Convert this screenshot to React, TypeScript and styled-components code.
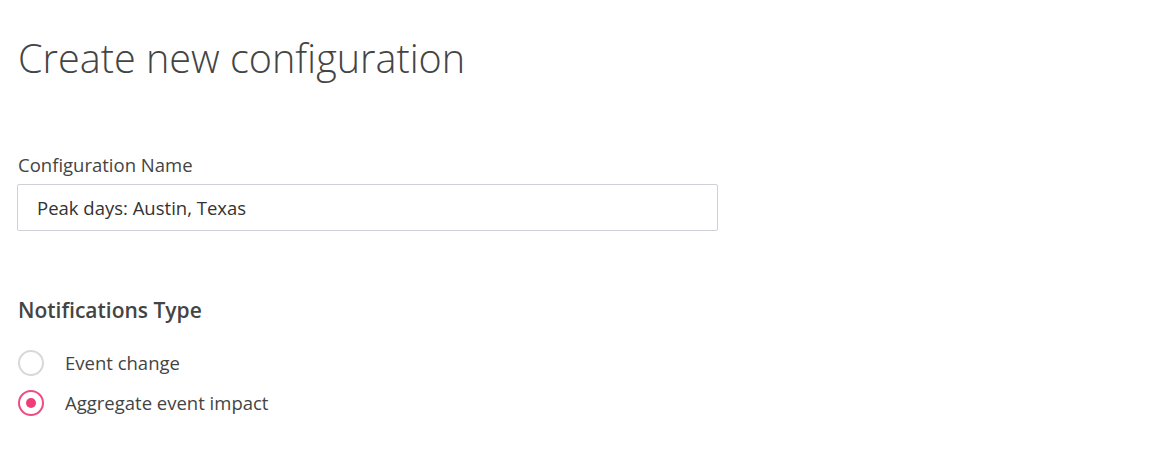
import React, { useState } from 'react';
import styled, { createGlobalStyle } from 'styled-components';

const GlobalStyle = createGlobalStyle`
  html, body {
    margin: 0;
    padding: 0;
    background: #fff;
    font-family: 'Open Sans', 'Noto Sans', sans-serif;
    color: #444;
  }
`;

const Page = styled.div`
  padding: 28px 18px;
  width: 700px;
`;

const Title = styled.h1`
  margin: 0 0 65px;
  font-size: 39.6px;
  font-weight: 300;
  line-height: 60px;
  color: #444;
`;

const Field = styled.div`
  display: flex;
  flex-direction: column;
  gap: 7px;
  margin-bottom: 65px;
`;

const Label = styled.label`
  font-size: 18.5px;
  line-height: 24px;
  color: #444;
`;

const TextInput = styled.input`
  box-sizing: border-box;
  width: 701px;
  height: 47px;
  margin-left: -1px;
  padding: 0 19px;
  border: 1px solid #cdd1d6;
  border-radius: 2px;
  font-family: inherit;
  font-size: 18.5px;
  color: #333;
  outline: none;
`;

const SectionTitle = styled.h2`
  margin: 0 0 26px;
  font-size: 21px;
  font-weight: 600;
  line-height: 28px;
  color: #444;
`;

const RadioList = styled.div`
  display: flex;
  flex-direction: column;
  gap: 14px;
`;

const RadioRow = styled.label`
  display: flex;
  align-items: center;
  gap: 21px;
  font-size: 18.5px;
  line-height: 26px;
  color: #444;
  cursor: pointer;
`;

const Circle = styled.span<{ checked: boolean }>`
  box-sizing: border-box;
  width: 26px;
  height: 26px;
  border-radius: 50%;
  border: 2px solid ${(p) => (p.checked ? '#ef4c84' : '#d6d8db')};
  display: flex;
  align-items: center;
  justify-content: center;

  &::after {
    content: '';
    width: 10px;
    height: 10px;
    border-radius: 50%;
    background: ${(p) => (p.checked ? '#ef3c7b' : 'transparent')};
  }
`;

const options = ['Event change', 'Aggregate event impact'];

const App = () => {
  const [selected, setSelected] = useState(1);

  return (
    <Page>
      <GlobalStyle />
      <Title>Create new configuration</Title>
      <Field>
        <Label>Configuration Name</Label>
        <TextInput defaultValue="Peak days: Austin, Texas" />
      </Field>
      <SectionTitle>Notifications Type</SectionTitle>
      <RadioList>
        {options.map((o, i) => (
          <RadioRow key={o} onClick={() => setSelected(i)}>
            <Circle checked={selected === i} />
            {o}
          </RadioRow>
        ))}
      </RadioList>
    </Page>
  );
};

export default App;
